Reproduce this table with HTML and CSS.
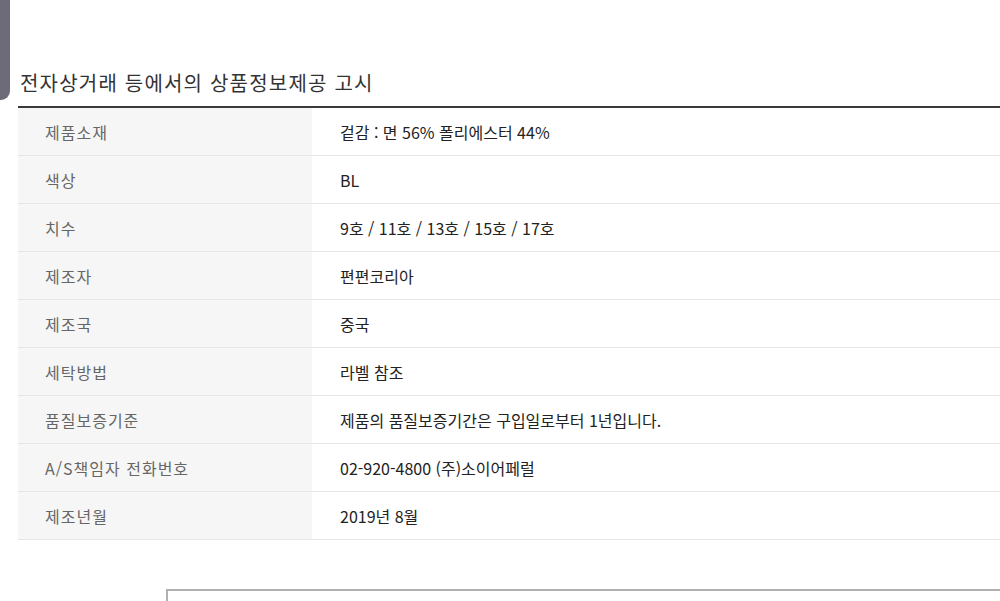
FILE: index.html
```html
<!DOCTYPE html>
<html lang="ko">
<head>
<meta charset="utf-8">
<link rel="stylesheet" href="styles.css">
</head>
<body>
<div class="page">
  <div class="side-tab"></div>
  <div class="main">
    <h2 class="title">전자상거래 등에서의 상품정보제공 고시</h2>
    <table class="info">
      <tr><th>제품소재</th><td>겉감 : 면 56% 폴리에스터 44%</td></tr>
      <tr><th>색상</th><td>BL</td></tr>
      <tr><th>치수</th><td>9호 / 11호 / 13호 / 15호 / 17호</td></tr>
      <tr><th>제조자</th><td>편편코리아</td></tr>
      <tr><th>제조국</th><td>중국</td></tr>
      <tr><th>세탁방법</th><td>라벨 참조</td></tr>
      <tr><th>품질보증기준</th><td>제품의 품질보증기간은 구입일로부터 1년입니다.</td></tr>
      <tr><th>A/S책임자 전화번호</th><td>02-920-4800 (주)소이어페럴</td></tr>
      <tr><th>제조년월</th><td>2019년 8월</td></tr>
    </table>
    <div class="next-box"></div>
  </div>
</div>
</body>
</html>
```

FILE: styles.css
```css
html, body {
  margin: 0;
  padding: 0;
  background: #fff;
  overflow: hidden;
}
body {
  font-family: "Noto Sans CJK KR", "Noto Sans", sans-serif;
  color: #333;
}
.page {
  display: flex;
  align-items: flex-start;
  width: 1000px;
  height: 601px;
  overflow: hidden;
}
.side-tab {
  flex: 0 0 10px;
  height: 100px;
  background: #6d6b77;
  border-bottom-right-radius: 9px;
}
.main {
  flex: 0 0 1000px;
  margin-left: 8px;
}
.title {
  margin: 68px 0 0 2px;
  font-size: 20px;
  line-height: 30px;
  font-weight: normal;
  color: #333;
  letter-spacing: 1.2px;
}
.info {
  width: 100%;
  margin-top: 8px;
  border-collapse: collapse;
  border-top: 2px solid #3a3a3a;
}
.info th,
.info td {
  height: 47px;
  padding: 0;
  border-bottom: 1px solid #e6e6e6;
  font-size: 16px;
  text-align: left;
  vertical-align: middle;
}
.info th {
  width: 294px;
  padding-left: 27px;
  box-sizing: border-box;
  background: #f6f6f6;
  color: #666;
  font-weight: normal;
  letter-spacing: 1px;
}
.info td {
  padding-left: 28px;
  color: #222;
  background: #fff;
}
.next-box {
  margin: 49px 0 0 148px;
  height: 60px;
  border: 2px solid #b0b0b0;
  border-right: none;
}
```
